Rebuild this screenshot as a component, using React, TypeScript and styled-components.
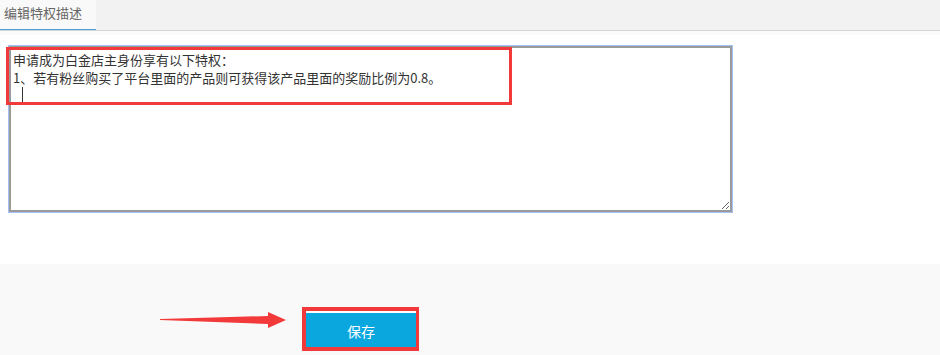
import React from "react";
import styled, { createGlobalStyle } from "styled-components";

const GlobalStyle = createGlobalStyle`
  html, body {
    margin: 0;
    padding: 0;
    background: #ffffff;
  }
  body {
    font-family: "Noto Sans CJK SC", "Liberation Sans", sans-serif;
    font-size: 13px;
    color: #333;
  }
`;

const Page = styled.div`
  width: 940px;
  height: 355px;
  display: flex;
  flex-direction: column;
  overflow: hidden;
`;

const TabBar = styled.div`
  display: flex;
  height: 30px;
  background: #f2f2f2;
  border-bottom: 1px solid #d6d6d6;
`;

const Tab = styled.div<{ $active?: boolean }>`
  width: 92px;
  height: 29px;
  padding-left: 4px;
  line-height: 25px;
  font-size: 13px;
  color: #666;
  background: ${(p) => (p.$active ? "#f9f9f9" : "transparent")};
  border-bottom: 1px solid ${(p) => (p.$active ? "#4a9fd4" : "transparent")};
`;

const Strip = styled.div`
  height: 4px;
  background: #fafafa;
`;

const Body = styled.div`
  padding: 11px 0 0 9px;
  height: 218px;
`;

const EditorWrap = styled.div`
  position: relative;
  width: 723px;
`;

const Editor = styled.textarea`
  display: block;
  box-sizing: border-box;
  width: 723px;
  height: 166px;
  margin: 0;
  padding: 3px 2px 2px;
  border: 2px solid #9a9a9a;
  box-shadow: 0 0 0 1px #a2c1f4;
  outline: none;
  font-family: "Noto Sans CJK SC", "Liberation Sans", sans-serif;
  font-size: 13px;
  line-height: 18px;
  color: #333;
  background: #fff;
  resize: both;
`;

/* caret shown on the empty third line in the reference */
const Caret = styled.div`
  position: absolute;
  left: 13px;
  top: 41px;
  width: 1px;
  height: 17px;
  background: #333;
  pointer-events: none;
`;

const Mark = styled.div`
  position: absolute;
  left: -3px;
  top: 1px;
  width: 506px;
  height: 58px;
  box-sizing: border-box;
  border: 3px solid #f23a3a;
  pointer-events: none;
`;

const Footer = styled.div`
  flex: 1;
  background: #f9f9f9;
  display: flex;
  align-items: flex-start;
  padding: 43px 0 0 158px;
`;

const Arrow = styled.svg`
  display: block;
  margin-top: 3px;
  margin-right: 14px;
`;

const Frame = styled.div`
  border: 4px solid #f23a3a;
  border-right-width: 3px;
  background: #fff;
  padding-top: 2px;
`;

const SaveButton = styled.button`
  display: block;
  width: 110px;
  height: 34px;
  padding: 1px 0 0;
  border: none;
  background: #0aa7df;
  color: #fff;
  font-family: "Noto Sans CJK SC", "Liberation Sans", sans-serif;
  font-size: 14px;
  cursor: pointer;
`;

const text = "申请成为白金店主身份享有以下特权：\n1、若有粉丝购买了平台里面的产品则可获得该产品里面的奖励比例为0.8。\n";

export default function App() {
  return (
    <Page>
      <GlobalStyle />
      <TabBar>
        <Tab $active>编辑特权描述</Tab>
      </TabBar>
      <Strip />
      <Body>
        <EditorWrap>
          <Editor defaultValue={text} />
          <Caret />
          <Mark />
        </EditorWrap>
      </Body>
      <Footer>
        <Arrow width="130" height="20" viewBox="0 0 130 20">
          <polygon
            points="2,9 110,6 110,2 128,10 110,18 110,14 2,10"
            fill="#f23a3a"
          />
        </Arrow>
        <Frame>
          <SaveButton>保存</SaveButton>
        </Frame>
      </Footer>
    </Page>
  );
}
